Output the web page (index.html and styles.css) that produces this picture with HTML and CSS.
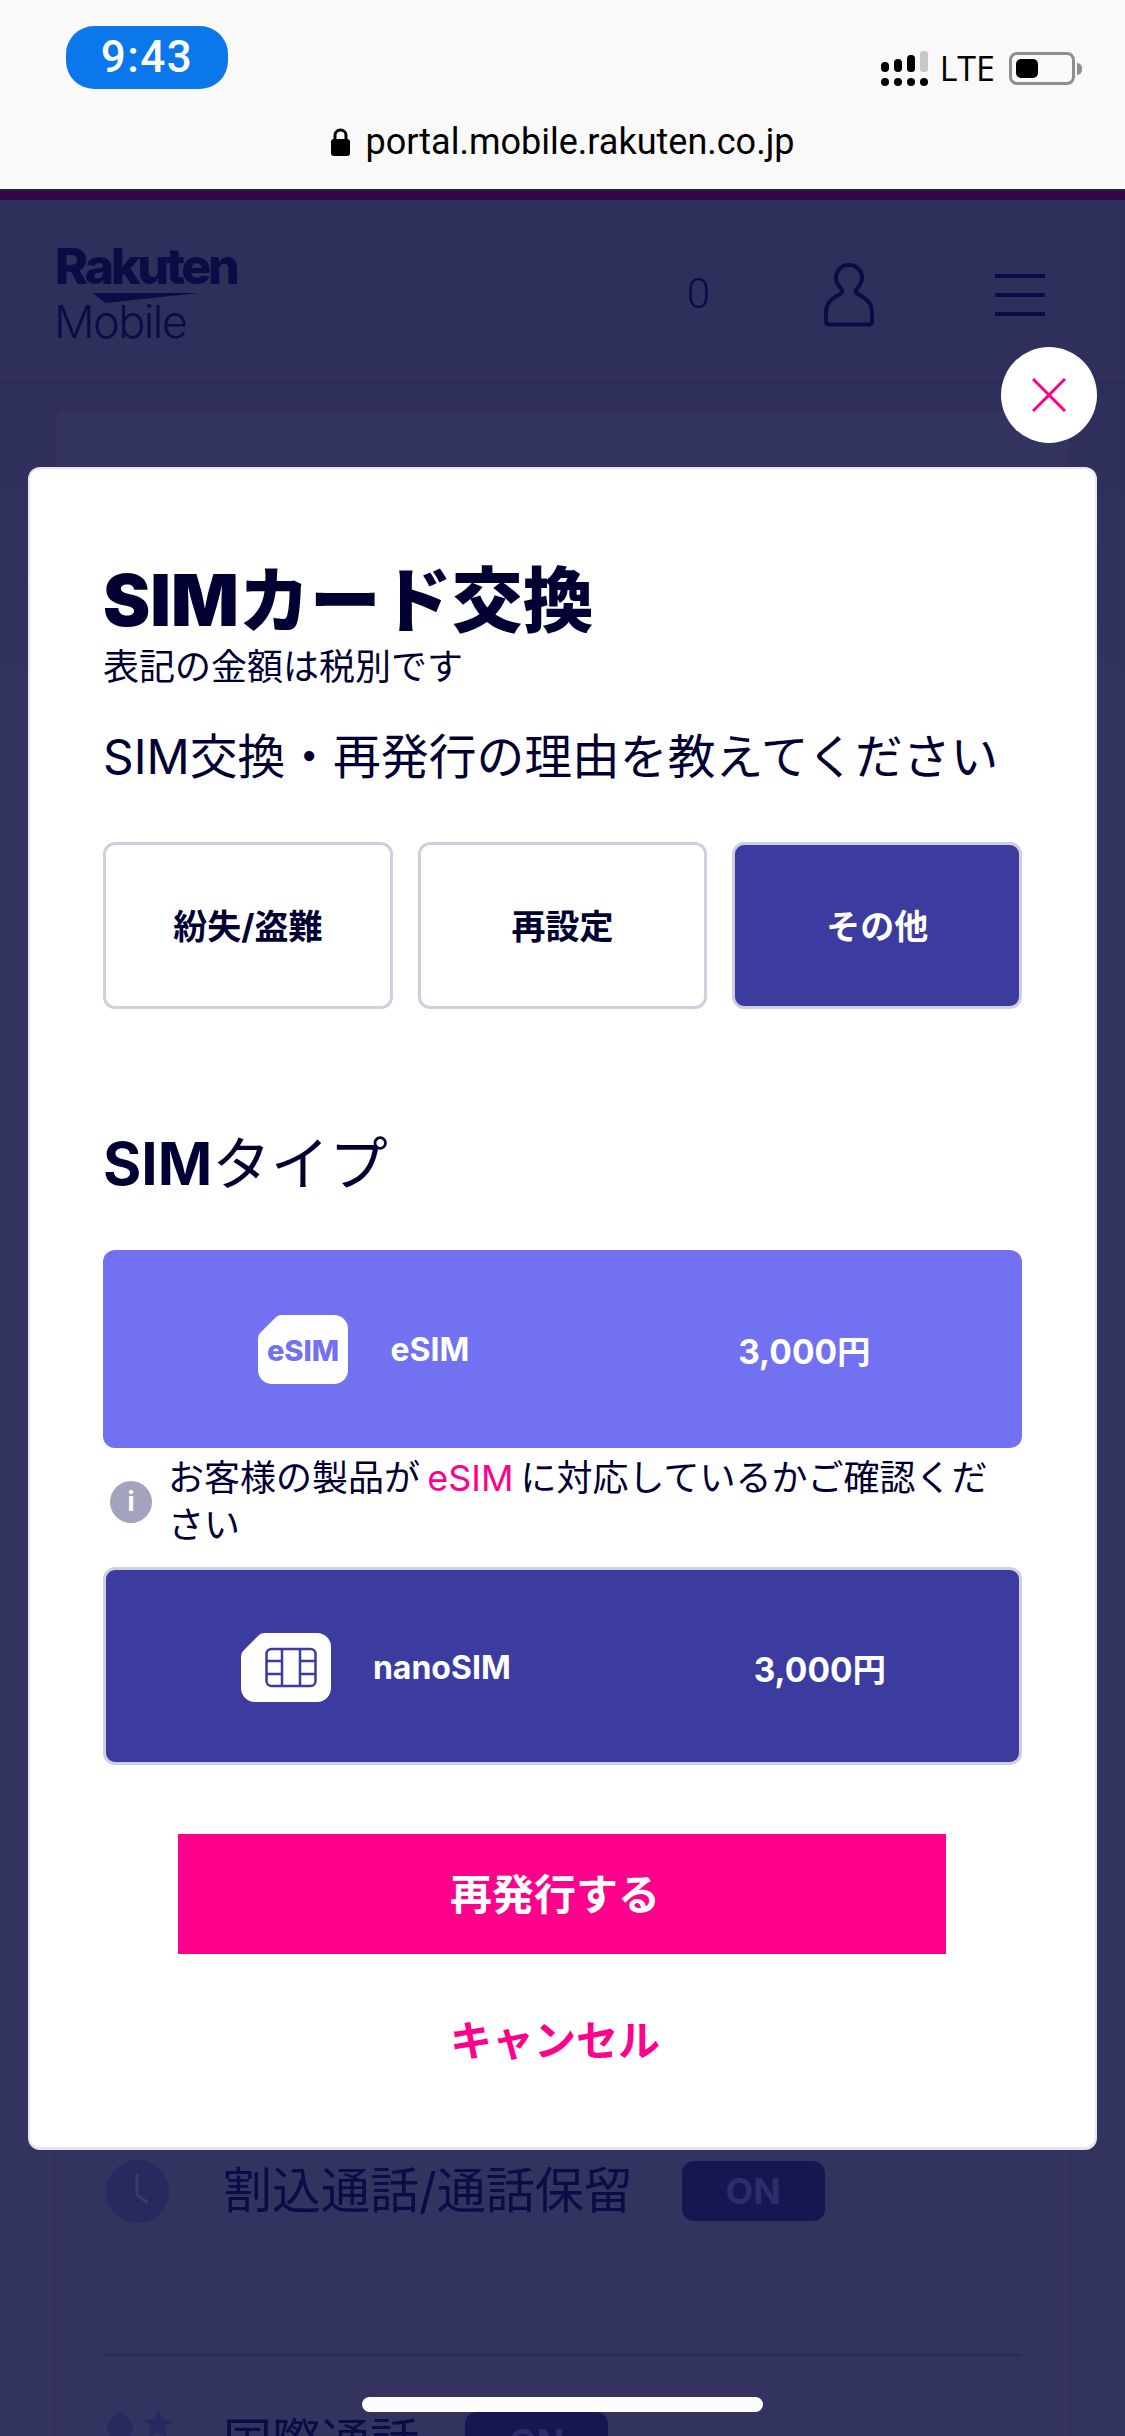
FILE: index.html
```html
<!DOCTYPE html>
<html lang="ja">
<head>
    <meta charset="UTF-8">
    <meta name="viewport" content="width=device-width, initial-scale=1.0">
    <title>SIMカード交換</title>
    <link rel="stylesheet" href="styles.css">
</head>
<body>
    <!-- Browser chrome -->
    <div class="browser-bar">
        <div class="status-row">
            <div class="time-pill">9:43</div>
            <div class="status-right">
                <svg class="signal" width="47" height="36" viewBox="0 0 47 36">
                    <rect x="0" y="11" width="8" height="10" rx="4" fill="#000"/>
                    <rect x="13" y="8" width="8" height="13" rx="4" fill="#000"/>
                    <rect x="26" y="4" width="8" height="17" rx="3.500" fill="#000"/>
                    <rect x="39" y="0" width="8" height="21" rx="3" fill="#c8c8c8"/>
                    <circle cx="4" cy="31" r="4" fill="#000"/>
                    <circle cx="17" cy="31" r="4" fill="#000"/>
                    <circle cx="30" cy="31" r="4" fill="#000"/>
                    <circle cx="43" cy="31" r="4" fill="#000"/>
                </svg>
                <span class="lte">LTE</span>
                <div class="battery"><div class="battery-level"></div></div>
                <div class="battery-nub"></div>
            </div>
        </div>
        <div class="url-row">
            <svg width="19" height="28" viewBox="0 0 19 28">
                <path d="M4 13V7.500a5.500 5.500 0 0 1 11 0V13" fill="none" stroke="#000" stroke-width="3"/>
                <rect x="0" y="11" width="19" height="17" rx="3" fill="#000"/>
            </svg>
            <span class="url">portal.mobile.rakuten.co.jp</span>
        </div>
    </div>

    <!-- Page behind the dialog -->
    <div class="page">
        <div class="top-stripe"></div>
        <header class="site-header">
            <div class="logo">
                <div class="logo-rakuten">Rakuten</div>
                <svg class="logo-swoosh" width="106" height="10" viewBox="0 0 106 10">
                    <path d="M0 0H106L12 10Z" fill="#0b0b45"/>
                </svg>
                <div class="logo-mobile">Mobile</div>
            </div>
            <div class="header-actions">
                <span class="cart-count">0</span>
                <svg class="user-icon" width="50" height="64" viewBox="0 0 50 64">
                    <path d="M25 2c8 0 13 6 13 13 0 6-4 9-6 12-1 2 0 3 2 4 7 4 14 8 14 19v9a2.500 2.500 0 0 1-2.500 2.500H4.500A2.500 2.500 0 0 1 2 59v-9c0-11 7-15 14-19 2-1 3-2 2-4-2-3-6-6-6-12C12 8 17 2 25 2Z" fill="none" stroke="#0b0b45" stroke-width="4"/>
                </svg>
                <div class="menu-icon"><span></span><span></span><span></span></div>
            </div>
        </header>
        <main class="usage-card">
            <div class="usage-row">
                <svg class="clock-icon" width="63" height="63" viewBox="0 0 63 63">
                    <circle cx="31.500" cy="31.500" r="31.500" fill="#29295f"/>
                    <path d="M31 14V35L42 43" fill="none" stroke="#3a3a6c" stroke-width="3"/>
                </svg>
                <span class="usage-label">割込通話/通話保留</span>
                <span class="toggle">ON</span>
            </div>
            <div class="usage-divider"></div>
            <div class="usage-row intl">
                <svg class="intl-icon" width="66" height="63" viewBox="0 0 66 63">
                    <path d="M14 0c-2 0-4 1-5 3L2 14c-1.500 3-1.500 5 0 8L14 40 26 22c1.500-3 1.500-5 0-8L19 3c-1-2-3-3-5-3Z" fill="#29295f"/>
                    <path d="M52-2l4.500 10 10.500 1-8 7 2.500 11-9.500-5.500-9.500 5.500 2.500-11-8-7 10.500-1Z" fill="#29295f"/>
                </svg>
                <span class="usage-label">国際通話</span>
                <span class="toggle">ON</span>
            </div>
        </main>
    </div>

    <!-- Close button -->
    <button class="close-btn">
        <svg width="34" height="34" viewBox="0 0 34 34">
            <path d="M1 1L33 33M33 1L1 33" stroke="#ff008c" stroke-width="3" fill="none"/>
        </svg>
    </button>

    <!-- Dialog -->
    <section class="dialog">
        <h1 class="dialog-title">SIMカード交換</h1>
        <p class="tax-note">表記の金額は税別です</p>
        <p class="question">SIM交換・再発行の理由を教えてください</p>

        <div class="reason-grid">
            <button class="reason">紛失/盗難</button>
            <button class="reason">再設定</button>
            <button class="reason selected">その他</button>
        </div>

        <h2 class="sim-heading"><b>SIM</b>タイプ</h2>

        <div class="sim-option esim">
            <svg class="sim-icon" width="90" height="69" viewBox="0 0 90 69">
                <path d="M24 0H76a14 14 0 0 1 14 14V55a14 14 0 0 1-14 14H14a14 14 0 0 1-14-14V24a9 9 0 0 1 3-7L17 3a9 9 0 0 1 7-3Z" fill="#fff"/>
                <text x="45" y="46" text-anchor="middle" class="sim-icon-text">eSIM</text>
            </svg>
            <span class="sim-name">eSIM</span>
            <span class="sim-price">3,000円</span>
        </div>

        <div class="info-row">
            <div class="info-icon">i</div>
            <p class="info-text">お客様の製品が <span class="pink">eSIM</span> に対応しているかご確認ください</p>
        </div>

        <div class="sim-option nano">
            <svg class="sim-icon" width="90" height="69" viewBox="0 0 90 69">
                <path d="M24 0H76a14 14 0 0 1 14 14V55a14 14 0 0 1-14 14H14a14 14 0 0 1-14-14V24a9 9 0 0 1 3-7L17 3a9 9 0 0 1 7-3Z" fill="#fff"/>
                <rect x="25.500" y="16" width="49" height="37" rx="5" fill="none" stroke="#3c3ba0" stroke-width="2.500"/>
                <path d="M41 16V53M59 16V53M25.500 28H41M25.500 41H41M59 28H74.500M59 41H74.500" fill="none" stroke="#3c3ba0" stroke-width="2.500"/>
            </svg>
            <span class="sim-name">nanoSIM</span>
            <span class="sim-price">3,000円</span>
        </div>

        <button class="submit-btn">再発行する</button>
        <button class="cancel-btn">キャンセル</button>
    </section>

    <div class="home-indicator"></div>
</body>
</html>
```

FILE: styles.css
```css
* {
    box-sizing: border-box;
}

body {
    margin: 0;
    width: 1125px;
    height: 2436px;
    overflow: hidden;
    position: relative;
    background-color: #333360;
    color: #000033;
    font-family: "Inter", "Noto Sans CJK JP", sans-serif;
}

button {
    font-family: inherit;
    cursor: pointer;
}

/* Browser chrome */
.browser-bar {
    height: 189px;
    background-color: #f9f9f9;
    padding: 26px 0 0;
}

.status-row {
    display: flex;
    justify-content: space-between;
    padding: 0 43px 0 66px;
}

.time-pill {
    width: 162px;
    height: 63px;
    border-radius: 28px;
    background-color: #0a78ea;
    color: white;
    font-family: "Roboto", sans-serif;
    font-size: 44px;
    font-weight: 500;
    letter-spacing: 1.500px;
    line-height: 63px;
    text-align: center;
}

.status-right {
    display: flex;
    align-items: center;
    height: 33px;
    margin-top: 26px;
}

.signal {
    margin-right: 12px;
    overflow: visible;
}

.lte {
    font-family: "Open Sans", sans-serif;
    font-size: 34px;
    color: black;
    line-height: 33px;
    margin-right: 14px;
}

.battery {
    width: 66px;
    height: 33px;
    border: 3px solid #8f8f8f;
    border-radius: 8px;
    padding: 4px;
}

.battery-level {
    width: 22px;
    height: 100%;
    background-color: black;
    border-radius: 5px;
}

.battery-nub {
    width: 5px;
    height: 12px;
    margin-left: 2px;
    background-color: #8f8f8f;
    border-radius: 0 6px 6px 0;
}

.url-row {
    display: flex;
    align-items: center;
    justify-content: center;
    gap: 16px;
    margin-top: 31px;
}

.url {
    font-family: "Roboto", sans-serif;
    font-size: 36px;
    color: black;
    line-height: 44px;
}

/* Page behind the dialog */
.page {
    height: 2247px;
    overflow: hidden;
    background: linear-gradient(#2d2e5a 194px, #333360 500px);
}

.top-stripe {
    height: 11px;
    background-color: #330545;
    border-top: 2px solid #22224f;
}

.site-header {
    height: 183px;
    background-color: #2e2f5b;
    border-bottom: 2px solid #2a2a55;
    display: flex;
    justify-content: space-between;
    padding: 42px 80px 0 55px;
}

.logo {
    width: 180px;
}

.logo-rakuten {
    font-size: 50px;
    font-weight: 800;
    letter-spacing: -3.200px;
    line-height: 48px;
    color: #0b0b45;
}

.logo-swoosh {
    display: block;
    margin: 3px 0 0 38px;
}

.logo-mobile {
    font-size: 45px;
    font-weight: 300;
    letter-spacing: -1.500px;
    line-height: 46px;
    margin: -4px 0 0 -1px;
    color: #0b0b45;
}

.header-actions {
    display: flex;
    align-items: flex-start;
}

.cart-count {
    font-family: "Roboto", sans-serif;
    font-size: 42px;
    font-weight: 300;
    line-height: 44px;
    margin-top: 30px;
    margin-right: 114px;
    color: #0b0b45;
}

.user-icon {
    margin-top: 21px;
    margin-right: 121px;
}

.menu-icon {
    width: 50px;
    margin-top: 32px;
    display: flex;
    flex-direction: column;
    gap: 15px;
}

.menu-icon span {
    height: 4px;
    background-color: #0b0b45;
}

.usage-card {
    margin: 26px 54px 0;
    height: 2100px;
    background-color: #333360;
    border: 2px solid #30305b;
    border-radius: 10px;
    padding: 1749px 48px 0 50px;
}

.usage-row {
    display: flex;
    align-items: center;
    height: 62px;
}

.clock-icon {
    margin-right: 54px;
}

.intl-icon {
    margin-right: 51px;
    overflow: visible;
}

.usage-label {
    font-size: 49px;
    line-height: 62px;
    margin-right: 49px;
    color: #0b0b45;
}

.intl .usage-label {
    margin-right: 46px;
}

.toggle {
    width: 143px;
    height: 60px;
    border-radius: 12px;
    background-color: #161650;
    color: #2d2d6b;
    font-size: 36px;
    font-weight: 700;
    line-height: 60px;
    text-align: center;
}

.usage-divider {
    height: 2px;
    margin: 132px 0 55px -2px;
    background-color: #2a2a56;
}

/* Close button */
.close-btn {
    position: absolute;
    left: 1001px;
    top: 347px;
    width: 96px;
    height: 96px;
    padding: 0;
    border: none;
    border-radius: 50%;
    background-color: white;
    display: flex;
    align-items: center;
    justify-content: center;
}

/* Dialog */
.dialog {
    position: absolute;
    left: 28px;
    top: 467px;
    width: 1069px;
    height: 1683px;
    padding: 96px 73px 0;
    background-color: white;
    border: 2px solid #e6e6f0;
    border-bottom-width: 3px;
    border-radius: 12px;
}

.dialog-title {
    margin: 0;
    font-size: 71px;
    font-weight: 900;
    line-height: 70px;
}

.tax-note {
    margin: 10px 0 0;
    font-size: 36px;
    line-height: 44px;
}

.question {
    margin: 38px 0 0;
    font-size: 47.800px;
    line-height: 60px;
    white-space: nowrap;
}

.reason-grid {
    display: grid;
    grid-template-columns: repeat(3, 1fr);
    gap: 25px;
    margin-top: 55px;
}

.reason {
    height: 167px;
    background-color: white;
    border: 3px solid #cfcfe0;
    border-radius: 12px;
    color: #000033;
    font-size: 34px;
    font-weight: 700;
    padding: 0 0 3px;
}

.reason.selected {
    background-color: #3c3ba0;
    color: white;
}

.sim-heading {
    margin: 120px 0 0;
    font-size: 58.500px;
    font-weight: 400;
    line-height: 70px;
}

.sim-heading b {
    font-weight: 700;
}

.sim-option {
    display: flex;
    align-items: center;
    justify-content: center;
    height: 198px;
    border-radius: 12px;
    color: white;
    font-size: 32px;
    font-weight: 700;
}

.sim-option.esim {
    margin-top: 51px;
    padding-left: 4px;
    background-color: #7171f2;
}

.sim-option.nano {
    margin-top: 18px;
    padding: 2px 0 0 2px;
    background-color: #3c3ba0;
    border: 3px solid #cfcfe0;
}

.sim-icon {
    margin-right: 42px;
}

.sim-icon-text {
    font-family: "Inter", sans-serif;
    font-size: 29px;
    font-weight: 800;
    fill: #7171f2;
}

.sim-price {
    font-size: 33.500px;
}

.esim .sim-name {
    margin-right: 269px;
}

.nano .sim-name {
    margin-right: 243px;
}

.info-row {
    display: flex;
    align-items: center;
    margin-top: 7px;
    padding-left: 7px;
}

.info-icon {
    flex: none;
    width: 42px;
    height: 42px;
    margin-right: 16px;
    border-radius: 50%;
    background-color: #a3a3bd;
    color: white;
    font-size: 26px;
    font-weight: 700;
    line-height: 42px;
    text-align: center;
}

.info-text {
    margin: 0;
    font-size: 36px;
    line-height: 47px;
    word-spacing: -3px;
}

.pink {
    color: #ff008c;
}

.submit-btn {
    display: block;
    width: 768px;
    height: 120px;
    margin: 69px 0 0 75px;
    padding: 0 14px 5px 0;
    border: none;
    background-color: #ff008c;
    color: white;
    font-size: 42px;
    font-weight: 700;
}

.cancel-btn {
    display: block;
    width: 768px;
    height: 60px;
    margin: 53px 0 0 75px;
    padding: 0 14px 2px 0;
    border: none;
    background: none;
    color: #ff008c;
    font-size: 42px;
    font-weight: 700;
}

.home-indicator {
    position: absolute;
    left: 362px;
    top: 2397px;
    width: 401px;
    height: 15px;
    border-radius: 8px;
    background-color: #fcfcfc;
}
```
